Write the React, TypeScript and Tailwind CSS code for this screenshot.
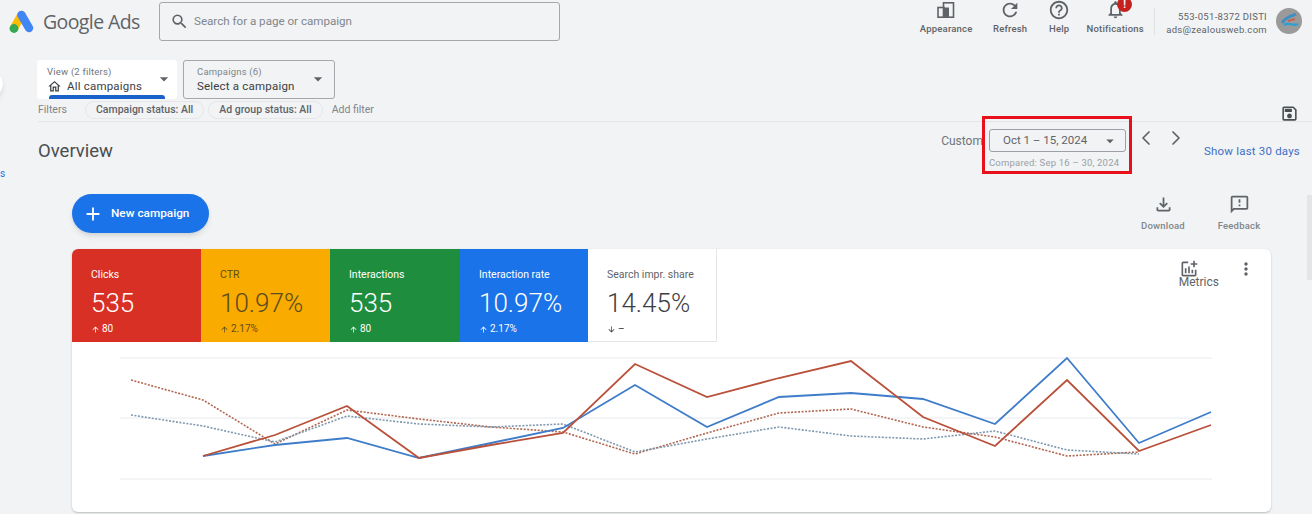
import React from 'react';
import {
  MdSearch, MdArrowDropDown, MdRefresh, MdOutlineHelpOutline, MdNotificationsNone, MdOutlineSave,
  MdAdd, MdOutlineFileDownload, MdOutlineFeedback, MdOutlineAddchart,
  MdMoreVert, MdOutlineHome, MdArrowUpward, MdArrowDownward
} from 'react-icons/md';
import { ChevronLeft, ChevronRight } from 'lucide-react';

const xs = [131, 203, 275, 347, 419, 491, 563, 635, 707, 779, 851, 923, 995, 1067, 1139, 1211];

const to_points = (values: (number | null)[]) =>
  values.map((y, i) => (y === null ? null : `${xs[i]},${y}`)).filter(Boolean).join(' ');

const red_solid = [null, 456, 435, 406, 458, 445, 433, 364, 397, 378, 361, 417, 446, 380, 451, 425];
const blue_solid = [null, 456, 445, 438, 458, 443, 428, 385, 427, 397, 393, 399, 424, 358, 443, 412];
const red_dotted = [380, 400, 444, 410, 419, 427, 432, 454, 433, 413, 409, 427, 437, 456, 452, null];
const blue_dotted = [415, 426, 442, 416, 424, 427, 424, 452, 439, 427, 436, 439, 431, 450, 454, null];

const top_actions = [
  { label: 'Refresh', icon: <MdRefresh size={22} />, w: 'w-[52px]' },
  { label: 'Help', icon: <MdOutlineHelpOutline size={22} />, w: 'w-[46px]' },
];

const cards = [
  { title: 'Clicks', value: '535', delta: '80', bg: 'bg-[#d93025]', fg: 'text-white', w: 'w-[129px]' },
  { title: 'CTR', value: '10.97%', delta: '2.17%', bg: 'bg-[#f9ab00]', fg: 'text-[#5c4e1e]', w: 'w-[129px]' },
  { title: 'Interactions', value: '535', delta: '80', bg: 'bg-[#1e8e3e]', fg: 'text-white', w: 'w-[130px]' },
  { title: 'Interaction rate', value: '10.97%', delta: '2.17%', bg: 'bg-[#1a73e8]', fg: 'text-white', w: 'w-[128px]' },
];

const GoogleAdsLogo = () => (
  <svg width="25" height="24" viewBox="0 0 25 24" className="shrink-0">
    <line x1="12.5" y1="5" x2="5" y2="18" stroke="#fbbc04" strokeWidth="8.5" strokeLinecap="round" />
    <line x1="12.5" y1="5" x2="20" y2="18" stroke="#4285f4" strokeWidth="8.5" strokeLinecap="round" />
    <circle cx="5" cy="18.5" r="4.4" fill="#34a853" />
  </svg>
);

const AppearanceIcon = () => (
  <svg width="18" height="16" viewBox="0 0 18 16" fill="none">
    <rect x="1" y="5.5" width="6" height="9.7" stroke="#5f6368" strokeWidth="1.6" />
    <rect x="6.5" y="0.8" width="10" height="14.4" stroke="#5f6368" strokeWidth="1.6" />
    <rect x="7" y="5.5" width="5" height="10" fill="#5f6368" />
  </svg>
);

const Avatar = () => (
  <svg width="26" height="26" viewBox="0 0 26 26">
    <circle cx="13" cy="13" r="13" fill="#9a9a9a" />
    <path d="M6 15 C10 9 14 9 20 6" stroke="#3f8fc4" strokeWidth="3" fill="none" />
    <path d="M8 17 C12 13 16 19 22 16" stroke="#2f9fd0" strokeWidth="2.5" fill="none" />
    <path d="M12 13 L19 11" stroke="#d0563f" strokeWidth="1.6" fill="none" />
  </svg>
);

const App: React.FC = () => {
  return (
    <div className="relative w-[1312px] h-[514px] overflow-hidden bg-[#f1f3f4] text-[#5f6368] font-['Roboto',sans-serif]">
      {/* collapsed side nav leftovers */}
      <div className="absolute left-[-25px] top-[70px] w-[28px] h-[28px] rounded-full bg-white shadow-md"></div>
      <span className="absolute left-0 top-[168px] text-[10px] leading-3 text-[#1a73e8]">s</span>
      <div className="absolute right-0 top-[195px] w-[5px] h-[85px] bg-[#e3e5e7]"></div>

      {/* top bar */}
      <header className="h-[42px] pt-[2px] flex items-start">
        <div className="w-[159px] h-[39px] pl-[9px] flex items-center gap-[9px]">
          <GoogleAdsLogo />
          <span className="text-[19.5px] text-[#5f6368] font-['Open_Sans',sans-serif] tracking-[-0.6px]">Google Ads</span>
        </div>
        <div className="w-[401px] h-[39px] border border-[#a4a7ab] rounded-[3px] pl-[10px] flex items-center gap-[5px]">
          <MdSearch size={19} className="text-[#5f6368]" />
          <span className="text-[11.6px] text-[#80868b]">Search for a page or campaign</span>
        </div>
        <div className="ml-auto pr-[10px] flex items-start">
          <div className="w-[64px] mr-[6px] h-[36px] flex flex-col items-center gap-[5px]">
            <AppearanceIcon />
            <span className="text-[9.5px] leading-3 font-medium tracking-[0.2px]">Appearance</span>
          </div>
          {top_actions.map(a => (
            <div key={a.label} className={`${a.w} h-[36px] mt-[-3px] flex flex-col items-center gap-[2px]`}>
              {a.icon}
              <span className="text-[9.5px] leading-3 font-medium tracking-[0.2px]">{a.label}</span>
            </div>
          ))}
          <div className="relative w-[66px] h-[36px] mt-[-3px] flex flex-col items-center gap-[3px]">
            <MdNotificationsNone size={21} />
            <span className="absolute left-[35px] top-[-2px] w-[15px] h-[15px] rounded-full bg-[#c5221f] text-white text-[10px] leading-[15px] text-center font-bold">!</span>
            <span className="text-[9.5px] leading-3 font-medium tracking-[0.2px]">Notifications</span>
          </div>
          <div className="w-px h-[27px] ml-[6px] mt-[6px] bg-[#dfe1e3]"></div>
          <div className="ml-[11px] pt-[9px] flex flex-col items-end gap-[2px] text-[9.5px] leading-[11px] tracking-[0.3px]">
            <span>553-051-8372 DISTI</span>
            <span>ads@zealousweb.com</span>
          </div>
          <div className="ml-[9px] mt-[6px]"><Avatar /></div>
        </div>
      </header>

      {/* campaign selectors */}
      <div className="mt-[18px] pl-[37px] flex gap-[6px]">
        <div className="relative w-[140px] h-[39px] bg-white rounded-[3px] pl-[10px] pt-[6px] overflow-hidden">
          <div className="text-[9.5px] leading-3 tracking-[0.2px] text-[#70757a]">View (2 filters)</div>
          <div className="flex items-center gap-[5px] text-[11.5px] leading-4 tracking-[0.2px] text-[#3c4043]">
            <MdOutlineHome size={15} />
            <span>All campaigns</span>
          </div>
          <MdArrowDropDown size={20} className="absolute right-[3px] top-[9px] text-[#5f6368]" />
          <div className="absolute left-[12px] bottom-0 w-[116px] h-[4px] rounded-t-[3px] bg-[#1a62c9]"></div>
        </div>
        <div className="relative w-[152px] h-[39px] border border-[#a4a7ab] rounded-[3px] pl-[13px] pt-[5px]">
          <div className="text-[9.5px] leading-3 tracking-[0.2px] text-[#80868b]">Campaigns (6)</div>
          <div className="text-[11.5px] leading-4 tracking-[0.2px] text-[#3c4043]">Select a campaign</div>
          <MdArrowDropDown size={20} className="absolute right-[6px] top-[8px] text-[#5f6368]" />
        </div>
      </div>

      {/* filter row */}
      <div className="ml-[38px] h-[23px] pb-[1px] flex items-center border-b border-[#e3e5e7] text-[10.5px]">
        <span className="text-[#80868b] w-[47px]">Filters</span>
        <span className="h-[18px] px-[10px] flex items-center rounded-full border border-[#e4e6e8] font-medium text-[#5f6368]">Campaign status: All</span>
        <span className="ml-[4px] h-[18px] px-[10px] flex items-center rounded-full border border-[#e4e6e8] font-medium text-[#5f6368]">Ad group status: All</span>
        <span className="ml-[9px] text-[#80868b]">Add filter</span>
        <MdOutlineSave size={19} className="ml-auto mr-[13px] mt-[7px] text-[#4a4d51]" />
      </div>

      {/* overview row */}
      <div className="h-[72px] pl-[38px] pr-[12px] flex items-start">
        <h1 className="mt-[17px] text-[18.5px] leading-6 text-[#4a4d51]">Overview</h1>
        <span className="ml-auto mt-[11px] text-[12px] leading-4 text-[#70757a]">Custom</span>
        <div className="w-[150px] h-[58px] mt-[-6px] ml-[-1px] border-[3px] border-[#e8101a] px-[4px] pt-[10px]">
          <div className="h-[23px] w-[137px] border border-[#9aa0a6] rounded-[3px] pl-[13px] pr-[6px] flex items-center justify-between text-[11.5px] text-[#5f6368]">
            <span>Oct 1 – 15, 2024</span>
            <MdArrowDropDown size={18} />
          </div>
          <div className="mt-[5px] text-[9.5px] leading-3 tracking-[0.2px] text-[#9aa0a6] whitespace-nowrap">Compared: Sep 16 – 30, 2024</div>
        </div>
        <ChevronLeft size={24} strokeWidth={1.7} className="ml-[2px] mt-[4px] text-[#5f6368]" />
        <ChevronRight size={24} strokeWidth={1.7} className="ml-[6px] mt-[4px] text-[#5f6368]" />
        <span className="ml-[16px] mt-[21px] text-[11.5px] leading-4 tracking-[0.2px] text-[#3f6fc4] whitespace-nowrap">Show last 30 days</span>
      </div>

      {/* new campaign + actions */}
      <div className="h-[55px] pl-[72px] pr-[41px] flex items-start">
        <button className="w-[137px] h-[39px] rounded-full bg-[#1a73e8] text-white shadow-md flex items-center pl-[10px] gap-[7px] text-[11.8px] font-medium">
          <MdAdd size={22} />
          <span>New campaign</span>
        </button>
        <div className="ml-auto flex">
          <div className="w-[64px] flex flex-col items-center gap-[5px]">
            <MdOutlineFileDownload size={21} />
            <span className="text-[9.5px] leading-3 font-medium tracking-[0.2px] text-[#80868b]">Download</span>
          </div>
          <div className="ml-[12px] w-[64px] flex flex-col items-center gap-[5px]">
            <MdOutlineFeedback size={21} />
            <span className="text-[9.5px] leading-3 font-medium tracking-[0.2px] text-[#80868b]">Feedback</span>
          </div>
        </div>
      </div>

      {/* main card */}
      <section className="ml-[72px] w-[1199px] h-[263px] bg-white rounded-[6px] shadow-[0_1px_2px_rgba(60,64,67,0.3)] overflow-hidden">
        <div className="h-[93px] flex">
          {cards.map(c => (
            <div key={c.title} className={`${c.w} ${c.bg} ${c.fg} pl-[19px] pt-[20px]`}>
              <div className="text-[10.5px] leading-3">{c.title}</div>
              <div className="mt-[8px] text-[26px] leading-7 font-light">{c.value}</div>
              <div className="mt-[6px] flex items-center text-[10px] leading-3">
                <MdArrowUpward size={9} className="mr-[2px]" />{c.delta}
              </div>
            </div>
          ))}
          <div className="w-[128px] ml-px border-r border-b border-[#e3e5e7] pl-[18px] pt-[20px] text-[#3c4043]">
            <div className="text-[10.5px] leading-3 text-[#5f6368]">Search impr. share</div>
            <div className="mt-[8px] text-[26px] leading-7 font-light">14.45%</div>
            <div className="mt-[6px] flex items-center text-[10px] leading-3">
              <MdArrowDownward size={9} className="mr-[2px]" />–
            </div>
          </div>
          <div className="ml-auto flex items-start pt-[10px] pr-[15px]">
            <div className="flex flex-col items-start">
              <MdOutlineAddchart size={20} className="ml-[-8px]" />
              <span className="ml-[-8px] mt-[-4px] text-[12px] leading-[14px]">Metrics</span>
            </div>
            <MdMoreVert size={20} className="ml-[17px]" />
          </div>
        </div>
        <svg width="1199" height="170" viewBox="72 342 1199 170" className="block">
          <line x1="120" y1="358" x2="1212" y2="358" stroke="#e8eaed" />
          <line x1="120" y1="418" x2="1212" y2="418" stroke="#e8eaed" />
          <line x1="120" y1="479" x2="1212" y2="479" stroke="#e8eaed" />
          <polyline points={to_points(red_dotted)} fill="none" stroke="#b0664f" strokeWidth="1.6" strokeDasharray="2 1.5" />
          <polyline points={to_points(blue_dotted)} fill="none" stroke="#7f98ad" strokeWidth="1.6" strokeDasharray="2 1.5" />
          <polyline points={to_points(blue_solid)} fill="none" stroke="#3f7cc9" strokeWidth="1.8" />
          <polyline points={to_points(red_solid)} fill="none" stroke="#b9503a" strokeWidth="1.8" />
        </svg>
      </section>
    </div>
  );
};

export default App;
